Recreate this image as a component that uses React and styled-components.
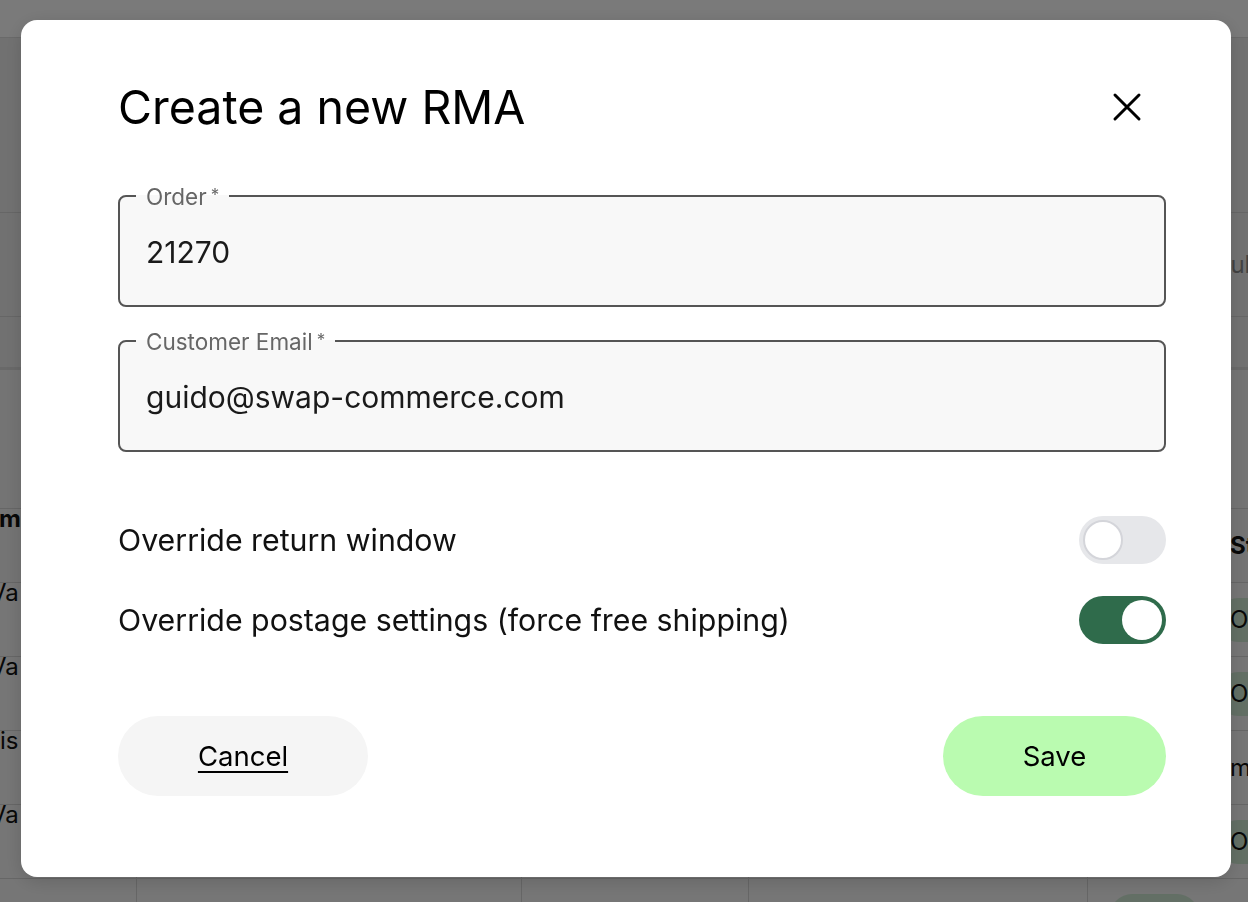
import React from "react";
import styled, { createGlobalStyle } from "styled-components";

const Global = createGlobalStyle`
  html, body { margin: 0; padding: 0; }
  body {
    font-family: Inter, "Noto Sans", "Liberation Sans", sans-serif;
    background: #f3f3f3;
    color: #111;
    overflow: hidden;
  }
  * { box-sizing: border-box; }
`;

/* ---------- page behind the dialog ---------- */
const Page = styled.div`
  width: 1248px;
  height: 902px;
  overflow: hidden;
  background: #f3f3f3;
`;
const TopBar = styled.div`
  height: 38px;
  background: #fff;
  border-bottom: 1px solid #ddd;
`;
const SummaryCard = styled.div`
  height: 332px;
  background: #ededed;
  border-bottom: 3px solid #dcdcdc;
  padding-top: 174px;
`;
const SummaryRow = styled.div`
  height: 105px;
  border-top: 1px solid #d6d6d6;
  border-bottom: 1px solid #d6d6d6;
  display: flex;
  align-items: center;
  padding-left: 1215px;
  font-size: 24px;
  color: #8a8a8a;
  white-space: nowrap;
  overflow: hidden;
`;
const TableWrap = styled.div`
  margin-top: 138px;
`;
const TRow = styled.div`
  height: 74px;
  border-top: 1px solid #d6d6d6;
  display: grid;
  grid-template-columns: 136px 385px 227px 339px 161px;
  background: ${(p) => (p.$head ? "#f3f3f3" : "#f6f6f6")};
  font-size: 24px;
  line-height: 28px;
  font-weight: ${(p) => (p.$head ? 700 : 400)};
  color: #111;
`;
const TCell = styled.div`
  height: 100%;
  display: flex;
  align-items: ${(p) => (p.$top ? "flex-start" : "center")};
  border-left: ${(p) => (p.$line ? "1px solid #d6d6d6" : "none")};
  white-space: nowrap;
  overflow: hidden;
  padding-left: ${(p) => p.$pl || 0}px;
  line-height: ${(p) => (p.$top ? "20px" : "28px")};
`;
const FirstText = styled.span`
  margin-left: ${(p) => p.$shift}px;
`;
const StatusPill = styled.span`
  display: inline-flex;
  align-items: center;
  height: 44px;
  padding: 0 14px;
  border-radius: 22px;
  background: ${(p) => (p.$green ? "#cfe9d3" : "transparent")};
`;

/* ---------- dialog ---------- */
const Overlay = styled.div`
  position: fixed;
  inset: 0;
  background: rgba(0, 0, 0, 0.52);
  display: flex;
  justify-content: center;
  align-items: flex-start;
  padding: 20px 0 0 4px;
`;
const Modal = styled.div`
  width: 1210px;
  height: 857px;
  background: #fff;
  border-radius: 16px;
  padding: 60px 65px 0 97px;
  display: flex;
  flex-direction: column;
  box-shadow: 0 4px 20px rgba(0, 0, 0, 0.15);
`;
const Header = styled.div`
  height: 54px;
  display: flex;
  align-items: center;
  justify-content: space-between;
`;
const Title = styled.h1`
  margin: 0;
  font-size: 46.5px;
  font-weight: 400;
  color: #000;
  line-height: 54px;
`;
const CloseButton = styled.button`
  width: 78px;
  height: 54px;
  border: none;
  background: none;
  padding: 0;
  display: flex;
  align-items: center;
  justify-content: center;
  cursor: pointer;
`;
const Fields = styled.div`
  margin-top: 49px;
  display: flex;
  flex-direction: column;
  gap: 21px;
`;
const Field = styled.fieldset`
  margin: 0;
  padding: 0 26px 10px;
  border: 2px solid #555;
  border-radius: 8px;
  background: #f8f8f8;
  min-width: 0;
`;
const Legend = styled.legend`
  margin-left: -10px;
  padding: 0 10px;
  font-size: 22.5px;
  line-height: 24px;
  color: #666;
`;
const Star = styled.span`
  font-size: 17px;
  vertical-align: 4px;
  margin-left: 4px;
`;
const Input = styled.input`
  display: block;
  width: 100%;
  height: 86px;
  border: none;
  outline: none;
  background: transparent;
  padding: 0;
  font-family: inherit;
  font-size: 30px;
  color: #1a1a1a;
`;
const Toggles = styled.div`
  margin-top: 64px;
  display: flex;
  flex-direction: column;
  gap: 32px;
`;
const ToggleRow = styled.label`
  height: 48px;
  display: flex;
  align-items: center;
  justify-content: space-between;
  font-size: 30.3px;
  color: #111;
`;
const Track = styled.span`
  width: 87px;
  height: 48px;
  border-radius: 24px;
  background: ${(p) => (p.$on ? "#2f6b4b" : "#e6e7ea")};
  display: flex;
  align-items: center;
  justify-content: ${(p) => (p.$on ? "flex-end" : "flex-start")};
  padding: 0 4px;
`;
const Knob = styled.span`
  width: 40px;
  height: 40px;
  border-radius: 50%;
  background: #fff;
  border: ${(p) => (p.$on ? "none" : "2px solid #d4d5da")};
`;
const Actions = styled.div`
  margin-top: 72px;
  display: flex;
  justify-content: space-between;
`;
const Button = styled.button`
  height: 80px;
  width: ${(p) => p.$w}px;
  border: none;
  border-radius: 40px;
  background: ${(p) => (p.$primary ? "#bafbb0" : "#f5f5f5")};
  font-family: inherit;
  font-size: 27.5px;
  color: #000;
  text-decoration: ${(p) => (p.$primary ? "none" : "underline")};
  text-underline-offset: 5px;
  text-decoration-thickness: 2px;
  cursor: pointer;
`;

function Toggle({ on }) {
  return (
    <Track $on={on}>
      <Knob $on={on} />
    </Track>
  );
}

const rows = [
  { a: "Va", shift: -10, s: "Open", g: true },
  { a: "Va", shift: -10, s: "Open", g: true },
  { a: "is", shift: 0, s: "manual", g: false },
  { a: "Va", shift: -10, s: "Open", g: true },
];

export default function App() {
  return (
    <>
      <Global />
      <Page>
        <TopBar />
        <SummaryCard>
          <SummaryRow>Subtotal</SummaryRow>
        </SummaryCard>
        <TableWrap>
          <TRow $head>
            <TCell $top>
              <FirstText $shift={-31}>Item</FirstText>
            </TCell>
            <TCell $line />
            <TCell $line />
            <TCell $line />
            <TCell $line $pl={142}>
              Status
            </TCell>
          </TRow>
          {rows.map((r, i) => (
            <TRow key={i}>
              <TCell $top>
                <FirstText $shift={r.shift}>{r.a}</FirstText>
              </TCell>
              <TCell $line />
              <TCell $line />
              <TCell $line />
              <TCell $line $pl={128}>
                <StatusPill $green={r.g}>{r.s}</StatusPill>
              </TCell>
            </TRow>
          ))}
          <TRow>
            <TCell />
            <TCell $line />
            <TCell $line />
            <TCell $line />
            <TCell $line $pl={22}>
              <StatusPill $green>Open</StatusPill>
            </TCell>
          </TRow>
        </TableWrap>
      </Page>
      <Overlay>
        <Modal role="dialog" aria-label="Create a new RMA">
          <Header>
            <Title>Create a new RMA</Title>
            <CloseButton aria-label="Close">
              <svg width="30" height="30" viewBox="0 0 30 30">
                <path
                  d="M3 3 L27 27 M27 3 L3 27"
                  stroke="#000"
                  strokeWidth="3"
                  strokeLinecap="round"
                  fill="none"
                />
              </svg>
            </CloseButton>
          </Header>
          <Fields>
            <Field>
              <Legend>
                Order<Star>*</Star>
              </Legend>
              <Input defaultValue="21270" />
            </Field>
            <Field>
              <Legend>
                Customer Email<Star>*</Star>
              </Legend>
              <Input defaultValue="guido@swap-commerce.com" />
            </Field>
          </Fields>
          <Toggles>
            <ToggleRow>
              Override return window
              <Toggle on={false} />
            </ToggleRow>
            <ToggleRow>
              Override postage settings (force free shipping)
              <Toggle on={true} />
            </ToggleRow>
          </Toggles>
          <Actions>
            <Button $w={250}>Cancel</Button>
            <Button $w={223} $primary>
              Save
            </Button>
          </Actions>
        </Modal>
      </Overlay>
    </>
  );
}
